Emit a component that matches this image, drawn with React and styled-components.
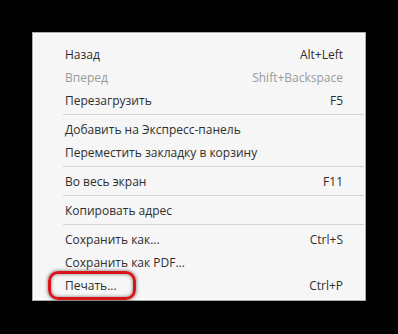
import React from "react";
import styled, { createGlobalStyle } from "styled-components";

const GlobalStyle = createGlobalStyle`
    html, body {
        margin: 0;
        background: #000;
    }
    body {
        padding: 32px 0 0 32px;
        font-family: "Open Sans", "Noto Sans", sans-serif;
    }
`;

const sections = [
    [
        { label: "Назад", shortcut: "Alt+Left" },
        { label: "Вперед", shortcut: "Shift+Backspace", disabled: true },
        { label: "Перезагрузить", shortcut: "F5" },
    ],
    [
        { label: "Добавить на Экспресс-панель" },
        { label: "Переместить закладку в корзину" },
    ],
    [{ label: "Во весь экран", shortcut: "F11" }],
    [{ label: "Копировать адрес" }],
    [
        { label: "Сохранить как...", shortcut: "Ctrl+S" },
        { label: "Сохранить как PDF..." },
        { label: "Печать...", shortcut: "Ctrl+P", marked: true },
    ],
];

export default function App() {
    return (
        <>
            <GlobalStyle />
            <Menu>
                {sections.map((items, i) => (
                    <React.Fragment key={i}>
                        {i > 0 && <Separator />}
                        {items.map((item) => (
                            <Row key={item.label} $disabled={item.disabled}>
                                <Label>{item.label}</Label>
                                {item.shortcut && <Shortcut>{item.shortcut}</Shortcut>}
                                {item.marked && <Highlight />}
                            </Row>
                        ))}
                    </React.Fragment>
                ))}
            </Menu>
        </>
    );
}

const Menu = styled.div`
    width: 332px;
    background: #f6f6f6;
    border: 1px solid #a9a9a9;
    box-shadow: inset 0 0 0 1px #ffffff;
    padding: 10px 0 3px;
    display: flex;
    flex-direction: column;
`;

const Row = styled.div`
    position: relative;
    height: 23px;
    display: flex;
    align-items: center;
    justify-content: space-between;
    padding: 0 22px 0 32px;
    font-size: 12px;
    color: ${(p) => (p.$disabled ? "#9a9a9a" : "#2e2e2e")};
`;

const Label = styled.span`
    white-space: nowrap;
`;

const Shortcut = styled.span`
    white-space: nowrap;
`;

const Separator = styled.div`
    height: 1px;
    margin: 2px 1px 3px 30px;
    background: #d4d4d4;
`;

const Highlight = styled.div`
    position: absolute;
    left: 15px;
    top: -3px;
    width: 82px;
    height: 23px;
    border: 3px solid #d9141b;
    border-radius: 10px;
    box-shadow: 0 0 3px 1px rgba(80, 80, 80, 0.5), inset 0 0 3px 1px rgba(80, 80, 80, 0.45);
    pointer-events: none;
`;
